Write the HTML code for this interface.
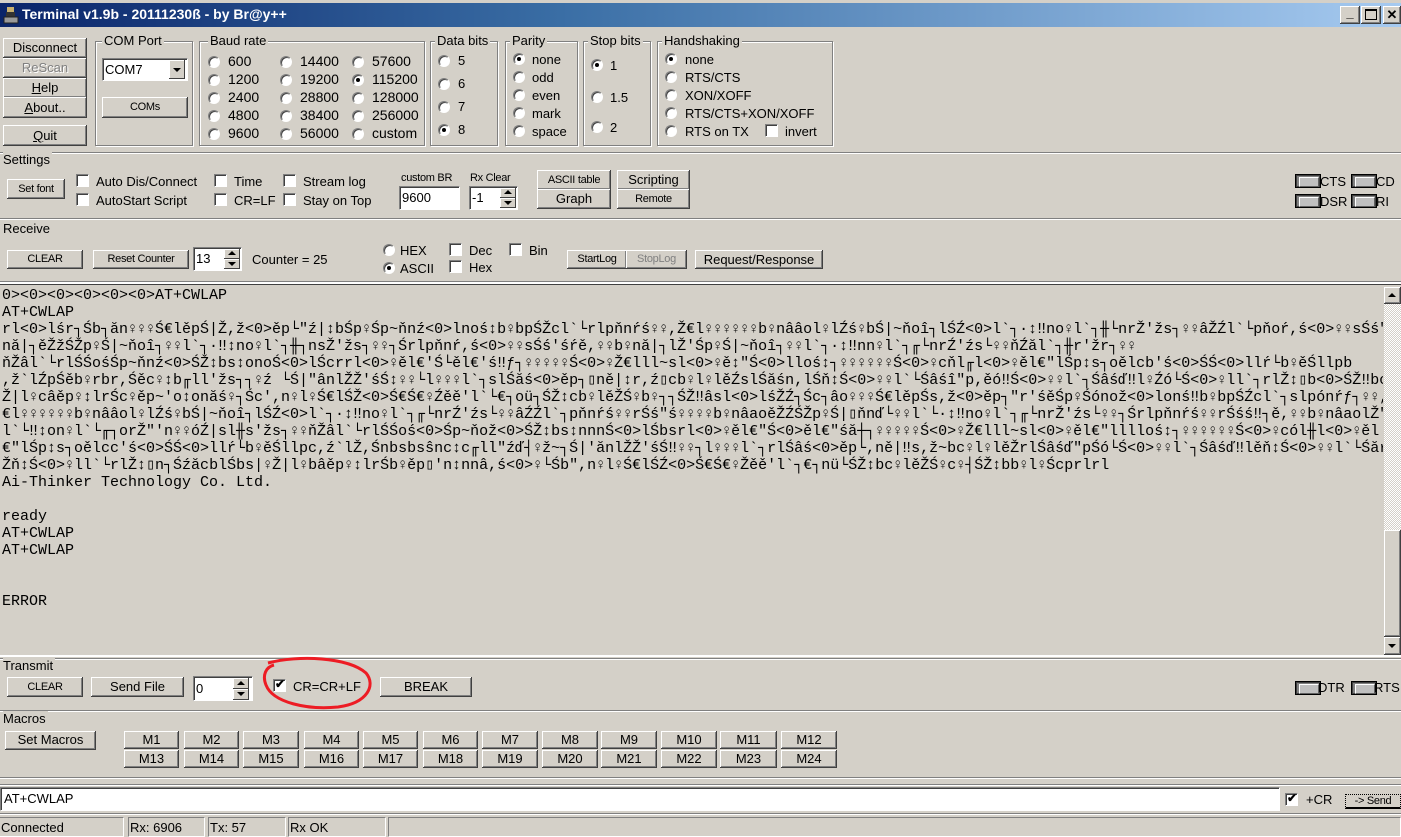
<!DOCTYPE html>
<html><head><meta charset="utf-8">
<style>
*{box-sizing:border-box;margin:0;padding:0}
body{width:1401px;height:837px;background:#d4d0c8;position:relative;overflow:hidden;font-family:"Liberation Sans",Arial,sans-serif;font-size:13px;color:#000}
.a{position:absolute;white-space:nowrap}
.btn{position:absolute;background:#d4d0c8;box-shadow:inset -1px -1px #404040,inset 1px 1px #fff,inset -2px -2px #808080,inset 2px 2px #d4d0c8;text-align:center;white-space:nowrap;font-size:13px}
.sm{font-size:11px;letter-spacing:-0.3px}
.grp{position:absolute;border:1px solid #808080;box-shadow:1px 1px 0 #fff,inset 1px 1px 0 #fff}
.grp>span{position:absolute;top:-9px;left:6px;background:#d4d0c8;padding:0 2px;font-size:13px;line-height:16px}
.rad{position:absolute;width:12px;height:12px;border-radius:50%;background:#fff;border:1px solid;border-color:#808080 #fff #fff #808080;box-shadow:inset 1px 1px #404040}
.rad.on::after{content:"";position:absolute;left:3px;top:3px;width:4px;height:4px;border-radius:50%;background:#000}
.chk{position:absolute;width:13px;height:13px;background:#fff;border:1px solid;border-color:#808080 #fff #fff #808080;box-shadow:inset 1px 1px #404040}
.sep{position:absolute;left:0;width:1401px;height:2px;border-top:1px solid #808080;border-bottom:1px solid #fff}
.sunk{position:absolute;background:#fff;border:1px solid;border-color:#808080 #fff #fff #808080;box-shadow:inset 1px 1px #404040}
.spin{position:absolute;width:16px;background:#d4d0c8;box-shadow:inset -1px -1px #404040,inset 1px 1px #fff}
.led{position:absolute;width:26px;height:14px;background:#808080;border:1px solid #000;box-shadow:inset 0 0 0 1px #404040}
.led::after{content:"";position:absolute;left:3px;top:2px;width:18px;height:8px;background:#c0c0c0;border:1px solid #fff;border-right-color:#606060;border-bottom-color:#606060}
.rx{position:absolute;left:2px;top:287px;width:1381px;height:368px;overflow:hidden;font-family:"Liberation Mono","DejaVu Sans Mono",monospace;font-size:15px;line-height:17px;white-space:pre}
.stat{position:absolute;top:817px;height:20px;border:1px solid;border-color:#808080 #fff #fff #808080;font-size:13px;padding:2px 0 0 1px}
</style></head><body>
<!-- title bar -->
<div class="a" style="left:0;top:3px;width:1401px;height:24px;background:linear-gradient(to right,#0a246a 0%,#3a6ea5 40%,#a6caf0 100%)"></div>
<div class="a" style="left:3px;top:6px;width:16px;height:18px"><svg width="16" height="18"><rect x="4" y="1" width="7" height="5" fill="#c8b070"/><rect x="3" y="6" width="9" height="5" fill="#333"/><rect x="1" y="11" width="14" height="6" fill="#999" stroke="#222"/></svg></div>
<div class="a" style="left:22px;top:6px;color:#fff;font-weight:bold;font-size:14px">Terminal v1.9b - 20111230ß - by Br@y++</div>
<div class="btn" style="left:1340px;top:6px;width:20px;height:18px;font-weight:bold;line-height:14px">_</div>
<div class="btn" style="left:1361px;top:6px;width:20px;height:18px"><div style="position:absolute;left:4px;top:3px;width:12px;height:11px;border:1px solid #000;border-top-width:2px"></div></div>
<div class="btn" style="left:1383px;top:6px;width:18px;height:18px;font-weight:bold;line-height:18px">✕</div>

<!-- left buttons -->
<div class="btn" style="left:3px;top:38px;width:84px;height:20px;line-height:20px">Disconnect</div>
<div class="btn" style="left:3px;top:58px;width:84px;height:20px;line-height:20px;color:#808080;text-shadow:1px 1px #fff">ReScan</div>
<div class="btn" style="left:3px;top:78px;width:84px;height:20px;line-height:20px"><u>H</u>elp</div>
<div class="btn" style="left:3px;top:97px;width:84px;height:21px;line-height:21px"><u>A</u>bout..</div>
<div class="btn" style="left:3px;top:125px;width:84px;height:21px;line-height:21px"><u>Q</u>uit</div>

<!-- COM Port -->
<div class="grp" style="left:95px;top:41px;width:98px;height:105px"><span>COM Port</span></div>
<div class="sunk" style="left:102px;top:58px;width:86px;height:23px"><span class="a" style="left:2px;top:3px">COM7</span><div class="spin" style="left:66px;top:1px;height:19px"><div style="position:absolute;left:4px;top:8px;border:4px solid transparent;border-top:4px solid #000;border-bottom:0"></div></div></div>
<div class="btn sm" style="left:102px;top:97px;width:86px;height:21px;line-height:21px">COMs</div>

<!-- Baud -->
<div class="grp" style="left:199px;top:41px;width:226px;height:105px"><span style="left:8px">Baud rate</span></div>
<div class="rad" style="left:208px;top:56px"></div><div class="a" style="left:228px;top:53px;font-size:14px">600</div>
<div class="rad" style="left:208px;top:74px"></div><div class="a" style="left:228px;top:71px;font-size:14px">1200</div>
<div class="rad" style="left:208px;top:92px"></div><div class="a" style="left:228px;top:89px;font-size:14px">2400</div>
<div class="rad" style="left:208px;top:110px"></div><div class="a" style="left:228px;top:107px;font-size:14px">4800</div>
<div class="rad" style="left:208px;top:128px"></div><div class="a" style="left:228px;top:125px;font-size:14px">9600</div>
<div class="rad" style="left:280px;top:56px"></div><div class="a" style="left:300px;top:53px;font-size:14px">14400</div>
<div class="rad" style="left:280px;top:74px"></div><div class="a" style="left:300px;top:71px;font-size:14px">19200</div>
<div class="rad" style="left:280px;top:92px"></div><div class="a" style="left:300px;top:89px;font-size:14px">28800</div>
<div class="rad" style="left:280px;top:110px"></div><div class="a" style="left:300px;top:107px;font-size:14px">38400</div>
<div class="rad" style="left:280px;top:128px"></div><div class="a" style="left:300px;top:125px;font-size:14px">56000</div>
<div class="rad" style="left:352px;top:56px"></div><div class="a" style="left:372px;top:53px;font-size:14px">57600</div>
<div class="rad on" style="left:352px;top:74px"></div><div class="a" style="left:372px;top:71px;font-size:14px">115200</div>
<div class="rad" style="left:352px;top:92px"></div><div class="a" style="left:372px;top:89px;font-size:14px">128000</div>
<div class="rad" style="left:352px;top:110px"></div><div class="a" style="left:372px;top:107px;font-size:14px">256000</div>
<div class="rad" style="left:352px;top:128px"></div><div class="a" style="left:372px;top:125px;font-size:14px">custom</div>

<!-- Data bits -->
<div class="grp" style="left:430px;top:41px;width:68px;height:105px"><span style="left:4px">Data bits</span></div>
<div class="rad" style="left:438px;top:55px"></div><div class="a" style="left:458px;top:53px">5</div>
<div class="rad" style="left:438px;top:78px"></div><div class="a" style="left:458px;top:76px">6</div>
<div class="rad" style="left:438px;top:101px"></div><div class="a" style="left:458px;top:99px">7</div>
<div class="rad on" style="left:438px;top:124px"></div><div class="a" style="left:458px;top:122px">8</div>

<!-- Parity -->
<div class="grp" style="left:505px;top:41px;width:73px;height:105px"><span style="left:4px">Parity</span></div>
<div class="rad on" style="left:513px;top:53px"></div><div class="a" style="left:532px;top:52px">none</div>
<div class="rad" style="left:513px;top:71px"></div><div class="a" style="left:532px;top:70px">odd</div>
<div class="rad" style="left:513px;top:89px"></div><div class="a" style="left:532px;top:88px">even</div>
<div class="rad" style="left:513px;top:107px"></div><div class="a" style="left:532px;top:106px">mark</div>
<div class="rad" style="left:513px;top:125px"></div><div class="a" style="left:532px;top:124px">space</div>

<!-- Stop bits -->
<div class="grp" style="left:583px;top:41px;width:68px;height:105px"><span style="left:4px">Stop bits</span></div>
<div class="rad on" style="left:591px;top:59px"></div><div class="a" style="left:610px;top:58px">1</div>
<div class="rad" style="left:591px;top:91px"></div><div class="a" style="left:610px;top:90px">1.5</div>
<div class="rad" style="left:591px;top:121px"></div><div class="a" style="left:610px;top:120px">2</div>

<!-- Handshaking -->
<div class="grp" style="left:657px;top:41px;width:176px;height:105px"><span style="left:4px">Handshaking</span></div>
<div class="rad on" style="left:665px;top:53px"></div><div class="a" style="left:685px;top:52px">none</div>
<div class="rad" style="left:665px;top:71px"></div><div class="a" style="left:685px;top:70px">RTS/CTS</div>
<div class="rad" style="left:665px;top:89px"></div><div class="a" style="left:685px;top:88px">XON/XOFF</div>
<div class="rad" style="left:665px;top:107px"></div><div class="a" style="left:685px;top:106px">RTS/CTS+XON/XOFF</div>
<div class="rad" style="left:665px;top:125px"></div><div class="a" style="left:685px;top:124px">RTS on TX</div>
<div class="chk" style="left:765px;top:124px"></div><div class="a" style="left:785px;top:124px">invert</div>

<!-- Settings -->
<div class="sep" style="top:152px"></div>
<div class="a" style="left:3px;top:152px;background:#d4d0c8;padding-right:2px">Settings</div>
<div class="btn sm" style="left:7px;top:179px;width:58px;height:20px;line-height:20px">Set font</div>
<div class="chk" style="left:76px;top:174px"></div><div class="a" style="left:96px;top:174px">Auto Dis/Connect</div>
<div class="chk" style="left:76px;top:193px"></div><div class="a" style="left:96px;top:193px">AutoStart Script</div>
<div class="chk" style="left:214px;top:174px"></div><div class="a" style="left:234px;top:174px">Time</div>
<div class="chk" style="left:214px;top:193px"></div><div class="a" style="left:234px;top:193px">CR=LF</div>
<div class="chk" style="left:283px;top:174px"></div><div class="a" style="left:303px;top:174px">Stream log</div>
<div class="chk" style="left:283px;top:193px"></div><div class="a" style="left:303px;top:193px">Stay on Top</div>
<div class="a sm" style="left:401px;top:172px">custom BR</div>
<div class="sunk" style="left:399px;top:186px;width:61px;height:24px"><span class="a" style="left:2px;top:3px">9600</span></div>
<div class="a sm" style="left:470px;top:172px">Rx Clear</div>
<div class="sunk" style="left:469px;top:186px;width:49px;height:24px"><span class="a" style="left:2px;top:3px">-1</span><div class="spin" style="left:30px;top:1px;height:10px"></div><div class="spin" style="left:30px;top:11px;height:10px"></div><div class="a" style="left:34px;top:3px;border:4px solid transparent;border-bottom:4px solid #000;border-top:0"></div><div class="a" style="left:34px;top:14px;border:4px solid transparent;border-top:4px solid #000;border-bottom:0"></div></div>
<div class="btn sm" style="left:537px;top:170px;width:74px;height:20px;line-height:20px">ASCII table</div>
<div class="btn" style="left:537px;top:189px;width:74px;height:20px;line-height:20px">Graph</div>
<div class="btn" style="left:617px;top:170px;width:73px;height:20px;line-height:20px">Scripting</div>
<div class="btn sm" style="left:617px;top:189px;width:73px;height:20px;line-height:20px">Remote</div>
<div class="led" style="left:1295px;top:174px"></div><div class="a" style="left:1320px;top:174px">CTS</div>
<div class="led" style="left:1351px;top:174px"></div><div class="a" style="left:1376px;top:174px">CD</div>
<div class="led" style="left:1295px;top:194px"></div><div class="a" style="left:1320px;top:194px">DSR</div>
<div class="led" style="left:1351px;top:194px"></div><div class="a" style="left:1376px;top:194px">RI</div>

<!-- Receive -->
<div class="sep" style="top:218px"></div>
<div class="a" style="left:3px;top:221px;background:#d4d0c8;padding-right:2px">Receive</div>
<div class="btn sm" style="left:7px;top:250px;width:76px;height:19px;line-height:19px">CLEAR</div>
<div class="btn sm" style="left:93px;top:250px;width:96px;height:19px;line-height:19px">Reset Counter</div>
<div class="sunk" style="left:193px;top:247px;width:49px;height:24px"><span class="a" style="left:2px;top:3px">13</span><div class="spin" style="left:30px;top:1px;height:10px"></div><div class="spin" style="left:30px;top:11px;height:10px"></div><div class="a" style="left:34px;top:3px;border:4px solid transparent;border-bottom:4px solid #000;border-top:0"></div><div class="a" style="left:34px;top:14px;border:4px solid transparent;border-top:4px solid #000;border-bottom:0"></div></div>
<div class="a" style="left:252px;top:252px">Counter =  25</div>
<div class="rad" style="left:383px;top:244px"></div><div class="a" style="left:400px;top:243px">HEX</div>
<div class="rad on" style="left:383px;top:262px"></div><div class="a" style="left:400px;top:261px">ASCII</div>
<div class="chk" style="left:449px;top:243px"></div><div class="a" style="left:469px;top:243px">Dec</div>
<div class="chk" style="left:449px;top:260px"></div><div class="a" style="left:469px;top:260px">Hex</div>
<div class="chk" style="left:509px;top:243px"></div><div class="a" style="left:529px;top:243px">Bin</div>
<div class="btn sm" style="left:567px;top:250px;width:60px;height:19px;line-height:19px">StartLog</div>
<div class="btn sm" style="left:626px;top:250px;width:61px;height:19px;line-height:19px;color:#808080">StopLog</div>
<div class="btn" style="left:695px;top:250px;width:128px;height:19px;line-height:19px">Request/Response</div>

<div class="a" style="left:0;top:281px;width:1401px;height:4px;border-top:1px solid #808080;border-bottom:1px solid #404040;background:#fff"></div>
<div class="rx">0&gt;&lt;0&gt;&lt;0&gt;&lt;0&gt;&lt;0&gt;&lt;0&gt;AT+CWLAP
AT+CWLAP
rl&lt;0&gt;lśr┐Śb┐ăn♀♀♀Ś€lěpŚ|Ž,ž&lt;0&gt;ěp└"ź|↕bŚp♀Śp~ňnź&lt;0&gt;lnoś↕b♀bpŚŽcl`└rlpňnŕś♀♀,Ž€l♀♀♀♀♀♀b♀nââol♀lŹś♀bŚ|~ňoî┐lŚŹ&lt;0&gt;l`┐·↕‼no♀l`┐╫└nrŽ'žs┐♀♀âŽŹl`└pňoŕ,ś&lt;0&gt;♀♀sŚś"ś♀♀♀♀b♀
nă|┐ěŽžŚŽp♀Ś|~ňoî┐♀♀l`┐·‼↕no♀l`┐╫┐nsŽ'žs┐♀♀┐Śrlpňnŕ,ś&lt;0&gt;♀♀sŚś'śŕě,♀♀b♀nă|┐lŽ'Śp♀Ś|~ňoî┐♀♀l`┐·↕‼nn♀l`┐╓└nrŹ'źs└♀♀ňŹăl`┐╫r'žr┐♀♀
ňŽâl`└rlŚŚośŚp~ňnź&lt;0&gt;ŚŽ↕bs↕onoŚ&lt;0&gt;lŚcrrl&lt;0&gt;♀ěl€'Ś└ěl€'ś‼ƒ┐♀♀♀♀♀Ś&lt;0&gt;♀Ž€lll~sl&lt;0&gt;♀ě↕"Ś&lt;0&gt;lloś↕┐♀♀♀♀♀♀Ś&lt;0&gt;♀cňl╓l&lt;0&gt;♀ěl€"lŚp↕s┐oělcb'ś&lt;0&gt;ŚŚ&lt;0&gt;llŕ└b♀ěŚllpb
,ž`lŹpŚěb♀rbr,Śěc♀↕b╓ll'žs┐┐♀ź └Ś|"ânlŽŽ'śŚ↕♀♀└l♀♀♀l`┐slŚăś&lt;0&gt;ěp┐▯ně|↕r,ź▯cb♀l♀lěŹslŚăśn,lŚň↕Ś&lt;0&gt;♀♀l`└Śâśî"p,ěó‼Ś&lt;0&gt;♀♀l`┐Śâśď‼l♀Źó└Ś&lt;0&gt;♀ll`┐rlŽ↕▯b&lt;0&gt;ŚŽ‼bc♀lŚcr|♀
Ž|l♀câěp♀↕lrŚc♀ěp~'o↕onăś♀┐Śc',n♀l♀Ś€lŚŽ&lt;0&gt;Ś€Ś€♀Źěě'l`└€┐oü┐ŚŽ↕cb♀lěŽŚ♀b♀┐┐ŚŽ‼âsl&lt;0&gt;lśŽŹ┐Śc┐âo♀♀♀Ś€lěpŚs,ž&lt;0&gt;ěp┐"r'śěŚp♀Śónož&lt;0&gt;lonś‼b♀bpŚŹcl`┐slpónŕƒ┐♀♀,Ž
€l♀♀♀♀♀♀b♀nââol♀lŹś♀bŚ|~ňoî┐lŚŹ&lt;0&gt;l`┐·↕‼no♀l`┐╓└nrŹ'źs└♀♀âŹŹl`┐pňnŕś♀♀rŚś"ś♀♀♀♀b♀nâaoěŽŹŚŽp♀Ś|▯ňnď└♀♀l`└·↕‼no♀l`┐╓└nrŽ'źs└♀♀┐Śrlpňnŕś♀♀rŚśś‼┐ě,♀♀b♀nâaolŽ"Śp♀Ś|▯ňnď└♀♀
l`└‼↕on♀l`└╓┐orŽ"'n♀♀óŹ|sl╫s'žs┐♀♀ňŽâl`└rlŚŚoś&lt;0&gt;Śp~ňož&lt;0&gt;ŚŽ↕bs↕nnnŚ&lt;0&gt;lŚbsrl&lt;0&gt;♀ěl€"Ś&lt;0&gt;ěl€"śă┼┐♀♀♀♀♀Ś&lt;0&gt;♀Ž€lll~sl&lt;0&gt;♀ěl€"lllloś↕┐♀♀♀♀♀♀Ś&lt;0&gt;♀cól╫l&lt;0&gt;♀ěl
€"lŚp↕s┐oělcc'ś&lt;0&gt;ŚŚ&lt;0&gt;llŕ└b♀ěŚllpc,ź`lŽ,Śnbsbsŝnc↕c╓ll"źď┤♀ž~┐Ś|'ănlŽŽ'śŚ‼♀♀┐l♀♀♀l`┐rlŚâś&lt;0&gt;ěp└,ně|‼s,ž~bc♀l♀lěŽrlŚâśď"pŚó└Ś&lt;0&gt;♀♀l`┐Śâśď‼lěň↕Ś&lt;0&gt;♀♀l`└Śăr'p,♀
Žň↕Ś&lt;0&gt;♀ll`└rlŽ↕▯n┐ŚźăcblŚbs|♀Ž|l♀bâěp♀↕lrŚb♀ěp▯'n↕nnâ,ś&lt;0&gt;♀└Śb",n♀l♀Ś€lŚŹ&lt;0&gt;Ś€Ś€♀Žěě'l`┐€┐nü└ŚŽ↕bc♀lěŽŚ♀c♀┤ŚŽ↕bb♀l♀Ścprlrl
Ai-Thinker Technology Co. Ltd.

ready
AT+CWLAP
AT+CWLAP


ERROR</div>
<!-- scrollbar -->
<div class="a" style="left:1384px;top:287px;width:17px;height:368px;background:repeating-conic-gradient(#fff 0 25%,#d4d0c8 0 50%) 0 0/2px 2px"></div>
<div class="btn" style="left:1384px;top:287px;width:17px;height:17px"><div class="a" style="left:4px;top:6px;border:4px solid transparent;border-bottom:4px solid #000;border-top:0"></div></div>
<div class="btn" style="left:1384px;top:530px;width:17px;height:107px"></div>
<div class="btn" style="left:1384px;top:637px;width:17px;height:18px"><div class="a" style="left:4px;top:7px;border:4px solid transparent;border-top:4px solid #000;border-bottom:0"></div></div>
<div class="a" style="left:0;top:655px;width:1401px;height:2px;background:#fff"></div>

<!-- Transmit -->
<div class="sep" style="top:658px"></div>
<div class="a" style="left:3px;top:658px;background:#d4d0c8;padding-right:2px">Transmit</div>
<div class="btn sm" style="left:7px;top:677px;width:76px;height:20px;line-height:20px">CLEAR</div>
<div class="btn" style="left:91px;top:677px;width:93px;height:20px;line-height:20px">Send File</div>
<div class="sunk" style="left:193px;top:676px;width:60px;height:25px"><span class="a" style="left:2px;top:4px">0</span><div class="spin" style="left:39px;top:1px;height:11px"></div><div class="spin" style="left:39px;top:12px;height:11px"></div><div class="a" style="left:43px;top:4px;border:4px solid transparent;border-bottom:4px solid #000;border-top:0"></div><div class="a" style="left:43px;top:15px;border:4px solid transparent;border-top:4px solid #000;border-bottom:0"></div></div>
<div class="chk" style="left:273px;top:679px"><div class="a" style="left:1px;top:-3px;font-size:12px;font-weight:bold">✔</div></div>
<div class="a" style="left:293px;top:679px">CR=CR+LF</div>
<div class="btn" style="left:380px;top:677px;width:92px;height:20px;line-height:20px">BREAK</div>
<svg class="a" style="left:258px;top:655px" width="120" height="55"><path d="M10 8 C40 0 90 2 108 18 C118 30 110 48 80 52 C50 55 15 48 8 30 C4 20 8 12 16 10" fill="none" stroke="#ed1c24" stroke-width="3"/></svg>
<div class="led" style="left:1295px;top:681px"></div><div class="a" style="left:1318px;top:680px">DTR</div>
<div class="led" style="left:1351px;top:681px"></div><div class="a" style="left:1374px;top:680px">RTS</div>

<!-- Macros -->
<div class="sep" style="top:710px"></div>
<div class="a" style="left:3px;top:711px;background:#d4d0c8;padding-right:2px">Macros</div>
<div class="btn" style="left:5px;top:731px;width:91px;height:19px;line-height:18px">Set Macros</div>
<div class="btn" style="left:124px;top:731px;width:55px;height:18px;line-height:18px">M1</div><div class="btn" style="left:124px;top:750px;width:55px;height:18px;line-height:18px">M13</div>
<div class="btn" style="left:184px;top:731px;width:55px;height:18px;line-height:18px">M2</div><div class="btn" style="left:184px;top:750px;width:55px;height:18px;line-height:18px">M14</div>
<div class="btn" style="left:243px;top:731px;width:56px;height:18px;line-height:18px">M3</div><div class="btn" style="left:243px;top:750px;width:56px;height:18px;line-height:18px">M15</div>
<div class="btn" style="left:304px;top:731px;width:55px;height:18px;line-height:18px">M4</div><div class="btn" style="left:304px;top:750px;width:55px;height:18px;line-height:18px">M16</div>
<div class="btn" style="left:363px;top:731px;width:55px;height:18px;line-height:18px">M5</div><div class="btn" style="left:363px;top:750px;width:55px;height:18px;line-height:18px">M17</div>
<div class="btn" style="left:423px;top:731px;width:55px;height:18px;line-height:18px">M6</div><div class="btn" style="left:423px;top:750px;width:55px;height:18px;line-height:18px">M18</div>
<div class="btn" style="left:482px;top:731px;width:56px;height:18px;line-height:18px">M7</div><div class="btn" style="left:482px;top:750px;width:56px;height:18px;line-height:18px">M19</div>
<div class="btn" style="left:542px;top:731px;width:56px;height:18px;line-height:18px">M8</div><div class="btn" style="left:542px;top:750px;width:56px;height:18px;line-height:18px">M20</div>
<div class="btn" style="left:601px;top:731px;width:56px;height:18px;line-height:18px">M9</div><div class="btn" style="left:601px;top:750px;width:56px;height:18px;line-height:18px">M21</div>
<div class="btn" style="left:661px;top:731px;width:56px;height:18px;line-height:18px">M10</div><div class="btn" style="left:661px;top:750px;width:56px;height:18px;line-height:18px">M22</div>
<div class="btn" style="left:720px;top:731px;width:57px;height:18px;line-height:18px">M11</div><div class="btn" style="left:720px;top:750px;width:57px;height:18px;line-height:18px">M23</div>
<div class="btn" style="left:781px;top:731px;width:56px;height:18px;line-height:18px">M12</div><div class="btn" style="left:781px;top:750px;width:56px;height:18px;line-height:18px">M24</div>

<div class="sep" style="top:777px"></div>
<div class="sep" style="top:784px"></div>
<div class="sunk" style="left:0;top:787px;width:1280px;height:24px"><span class="a" style="left:3px;top:3px">AT+CWLAP</span></div>
<div class="chk" style="left:1285px;top:793px"><div class="a" style="left:1px;top:-3px;font-size:12px;font-weight:bold">✔</div></div>
<div class="a" style="left:1306px;top:792px">+CR</div>
<div class="a sm" style="left:1345px;top:794px;width:56px;height:15px;border:1px dotted #000;border-bottom:2px solid #000;text-align:center;line-height:13px">-&gt; Send</div>
<div class="sep" style="top:813px"></div>

<!-- status -->
<div class="stat" style="left:0;width:124px;border-left:none">Connected</div>
<div class="stat" style="left:128px;width:77px">Rx: 6906</div>
<div class="stat" style="left:208px;width:78px">Tx: 57</div>
<div class="stat" style="left:288px;width:98px">Rx OK</div>
<div class="stat" style="left:388px;width:1013px"></div>
</body></html>
